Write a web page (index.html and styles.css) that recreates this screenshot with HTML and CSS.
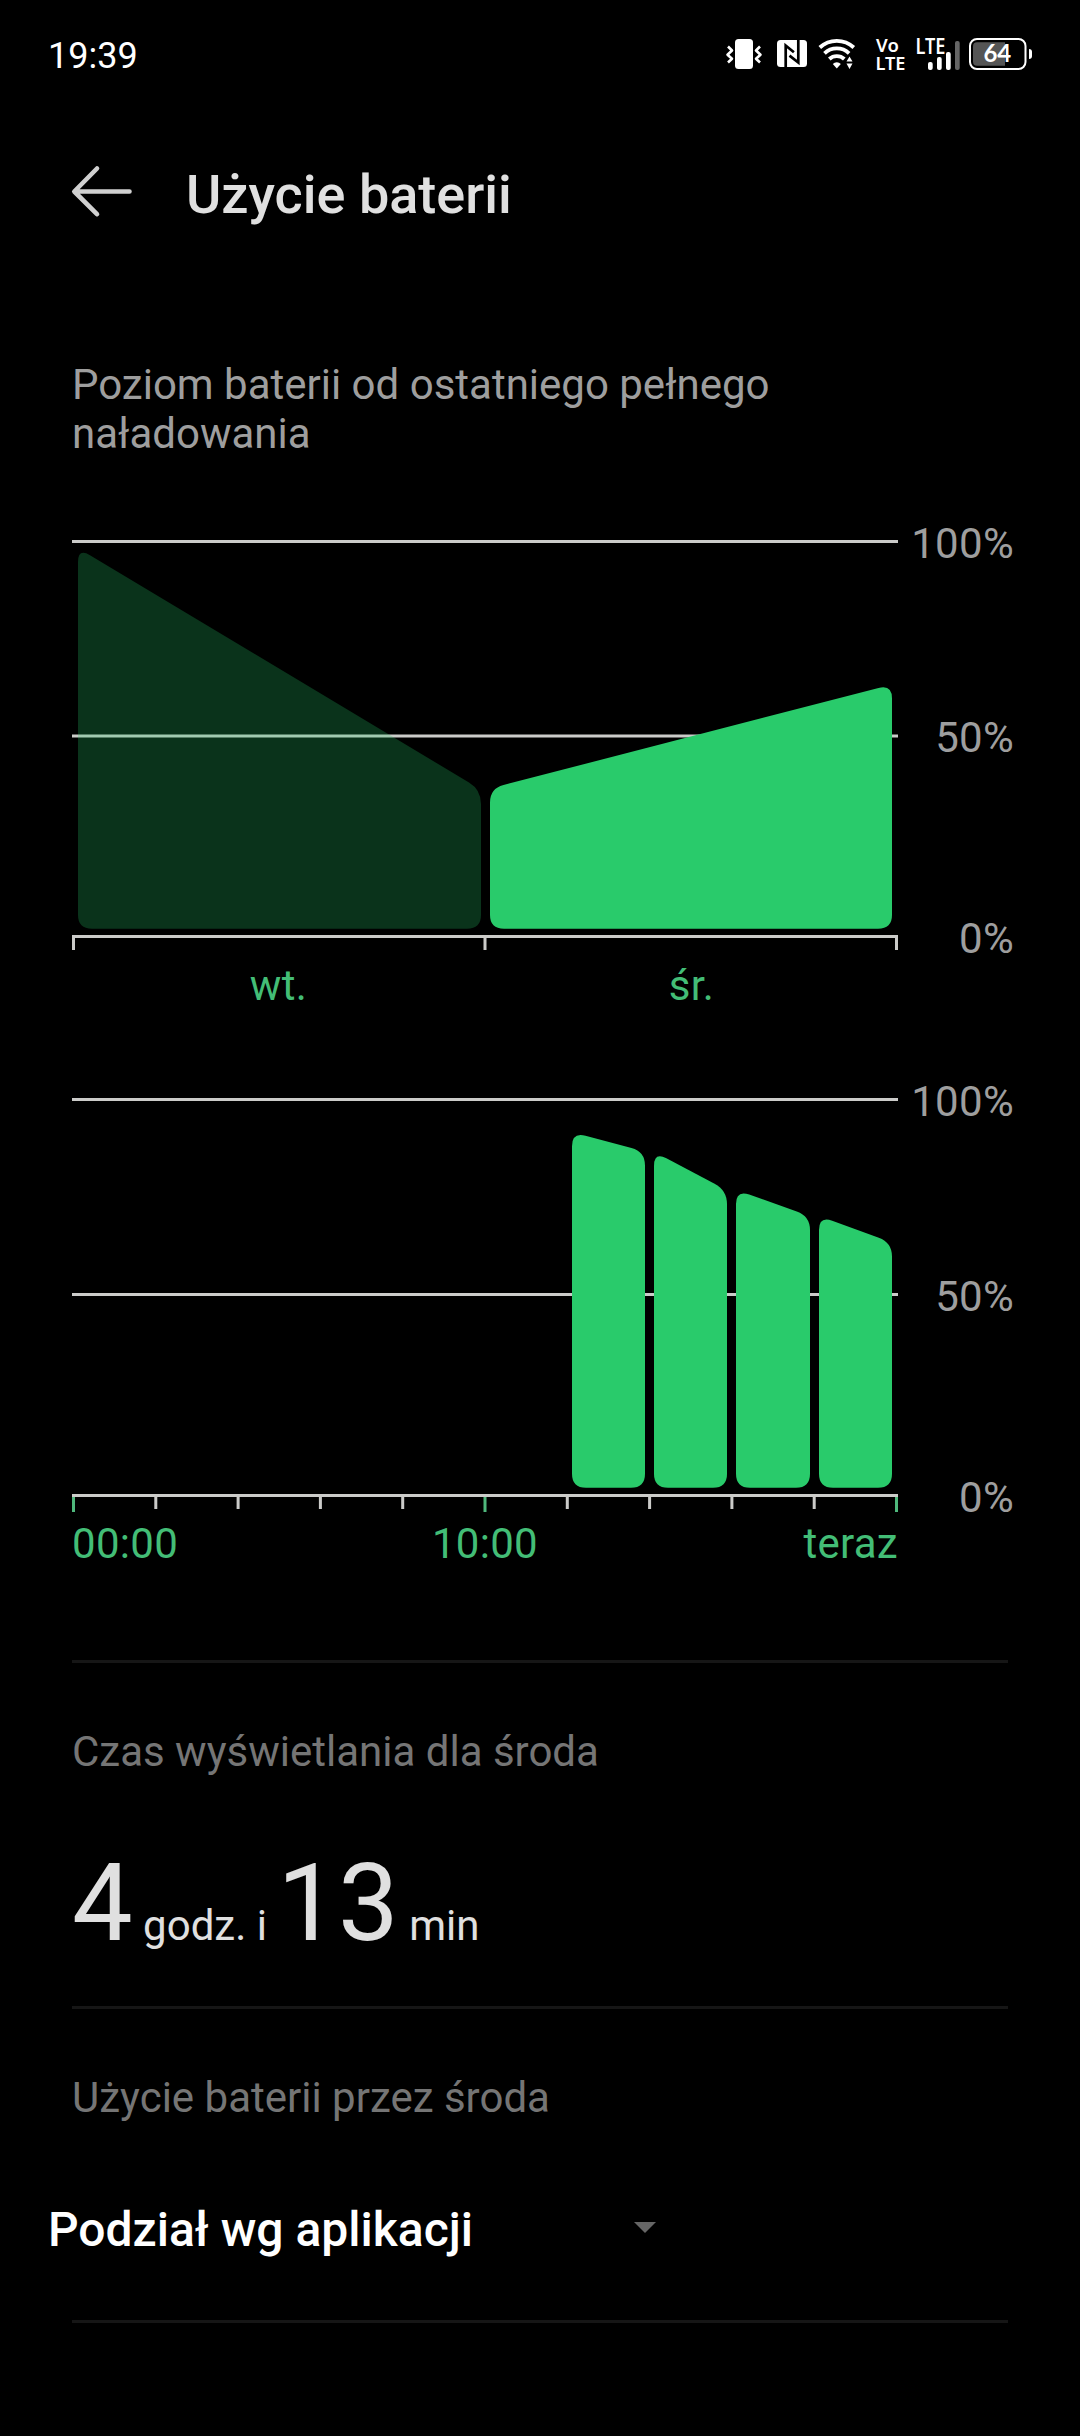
FILE: index.html
```html
<!doctype html>
<html lang="pl">
  <head>
    <meta charset="UTF-8" />
    <meta name="viewport" content="width=device-width, initial-scale=1.0" />
    <title>Użycie baterii</title>
    <link rel="stylesheet" href="styles.css">
  </head>
  <body>
    <div class="status-bar">
      <span class="clock">19:39</span>
      <svg class="status-icons" width="316" height="50" viewBox="720 24 316 50">
        <!-- vibrate -->
        <rect x="735" y="39" width="18" height="30" rx="3.5" fill="#fff" />
        <path d="M728 46.500l4 4-4.500 4.200 4.500 4-4 3.800M760 46.500l-4 4 4.500 4.200-4.500 4 4 3.800" fill="none" stroke="#fff" stroke-width="2.600" stroke-linejoin="round" />
        <!-- nfc -->
        <rect x="777" y="40" width="30" height="27" rx="3.500" fill="#fff" />
        <path d="M785.700 67V45.500L793.900 52.200M789.500 55.600L798.300 62.500V40" fill="none" stroke="#000" stroke-width="2.700" />
        <!-- wifi -->
        <g fill="none" stroke="#fff" stroke-width="3.800">
          <path d="M819.800 47.500a25 25 0 0 1 34 0" />
          <path d="M824.500 53.300a18 18 0 0 1 24.600 0" />
          <path d="M829.300 59a11 11 0 0 1 15 0" />
        </g>
        <path d="M836.800 68.500l-4-4.500a5.500 5.500 0 0 1 8 0z" fill="#fff" />
        <path d="M846.500 61.500h6l-3-5zM846.500 63.500h6l-3 5.500z" fill="#fff" />
        <!-- volte -->
        <text class="net" x="876" y="52" font-size="18.500" textLength="23">Vo</text>
        <text class="net" x="875.500" y="70" font-size="18" textLength="30" lengthAdjust="spacingAndGlyphs">LTE</text>
        <!-- signal -->
        <text class="net" x="915.500" y="53.500" font-size="21" textLength="30" lengthAdjust="spacingAndGlyphs">LTE</text>
        <g fill="#fff">
          <rect x="928" y="62" width="4.700" height="8" rx="2" />
          <rect x="937" y="57" width="4.700" height="13" rx="2" />
          <rect x="946" y="52" width="4.700" height="18" rx="2" />
          <rect x="955" y="41" width="4.700" height="29" rx="2" fill="#666" />
        </g>
        <!-- battery -->
        <path d="M977 42.300h28v23.400H977a4 4 0 0 1-4-4V46.300a4 4 0 0 1 4-4z" fill="#555" />
        <rect x="970" y="39" width="55.500" height="30" rx="7" fill="none" stroke="#fff" stroke-width="2" />
        <path d="M1029 49a3 3 0 0 1 3 3v4a3 3 0 0 1-3 3z" fill="#fff" />
        <text class="battery-text" x="997.300" y="62.300" text-anchor="middle">64</text>
      </svg>
    </div>

    <div class="title-bar">
      <svg class="back" width="62" height="54" viewBox="0 0 62 54">
        <path d="M27 4.500L4.300 27.500l22.700 22.700M5 27.500h54.500" fill="none" stroke="#d0d0d0" stroke-width="4.600" stroke-linecap="round" stroke-linejoin="round" />
      </svg>
      <h1>Użycie baterii</h1>
    </div>

    <p class="subtitle">Poziom baterii od ostatniego pełnego naładowania</p>

    <div class="chart">
      <div class="plot">
        <svg width="826" height="414" viewBox="0 0 826 414">
          <path class="axis" d="M0 0h826v3H0zM0 194.500h826v3H0zM0 395h826v3H0zM0 395h3v15H0zM411.500 395h3v15h-3zM823 395h3v15h-3z" />
          <path class="bar faded" d="M6 22Q6 8 18 15.200L397 242.500Q409 249.700 409 264V375Q409 388.700 395 388.700H20Q6 388.700 6 375z" />
          <path class="bar" d="M418 262.500Q418 248.500 431.500 245L806.500 147.900Q820 144.400 820 158.400V375Q820 388.700 806 388.700H432Q418 388.700 418 375z" />
        </svg>
        <div class="x-labels days">
          <span>wt.</span>
          <span>śr.</span>
        </div>
      </div>
      <div class="y-labels">
        <span>100%</span>
        <span>50%</span>
        <span>0%</span>
      </div>
    </div>

    <div class="chart">
      <div class="plot">
        <svg width="826" height="414" viewBox="0 0 826 414">
          <path class="axis" d="M0 0h826v3H0zM0 195h826v3H0zM0 396h826v3H0z" />
          <path class="axis" d="M82.300 399h3v12h-3zM164.600 399h3v12h-3zM246.900 399h3v12h-3zM329.200 399h3v12h-3zM493.800 399h3v12h-3zM576.100 399h3v12h-3zM658.400 399h3v12h-3zM740.700 399h3v12h-3z" />
          <path class="tick" d="M0 399h3v15H0zM411.500 399h3v15h-3zM823 399h3v15h-3z" />
          <path class="bar" d="M500 48.200Q500 34.200 513.500 37.800L559.500 49.900Q573 53.500 573 67.500V375.700Q573 389.700 559 389.700H514Q500 389.700 500 375.700z" />
          <path class="bar" d="M582 67.800Q582 53.800 594.400 60.300L642.600 85.700Q655 92.300 655 106.300V375.700Q655 389.700 641 389.700H596Q582 389.700 582 375.700z" />
          <path class="bar" d="M664 106Q664 92 677.200 96.600L724.800 113.400Q738 118 738 132V375.700Q738 389.700 724 389.700H678Q664 389.700 664 375.700z" />
          <path class="bar" d="M747 132Q747 118 760.200 122.700L806.800 139.800Q820 144.600 820 158.600V375.700Q820 389.700 806 389.700H761Q747 389.700 747 375.700z" />
        </svg>
        <div class="x-labels hours">
          <span>00:00</span>
          <span>10:00</span>
          <span>teraz</span>
        </div>
      </div>
      <div class="y-labels hourly">
        <span>100%</span>
        <span>50%</span>
        <span>0%</span>
      </div>
    </div>

    <div class="section screen-time">
      <h2>Czas wyświetlania dla środa</h2>
      <p class="duration"><b>4</b> godz. i <b>13</b> min</p>
    </div>

    <div class="section usage">
      <h2>Użycie baterii przez środa</h2>
      <div class="dropdown">
        <span>Podział wg aplikacji</span>
        <svg width="22" height="11" viewBox="0 0 22 11">
          <path d="M0 0h22L11 11z" fill="#666" />
        </svg>
      </div>
    </div>

    <div class="section"></div>
  </body>
</html>
```
FILE: styles.css
```css
* {
  box-sizing: border-box;
}
body {
  margin: 0;
  height: 2436px;
  background-color: #000;
  color: #e0e0e0;
  font-family: Roboto, "Noto Sans", sans-serif;
  font-size: 42px;
  line-height: 49px;
  overflow: hidden;
}
h1,
h2,
p {
  margin: 0;
  font-weight: 400;
}
svg {
  display: block;
}
.status-bar {
  display: flex;
  justify-content: space-between;
  padding: 24px 44px 0 48px;
  height: 112px;
}
.clock {
  padding-top: 10px;
  color: #fff;
  font-size: 36px;
  line-height: 45px;
}
.net {
  font-family: "Noto Sans", sans-serif;
  font-weight: 600;
  fill: #fff;
}
.battery-text {
  font-family: Lato, sans-serif;
  font-size: 24px;
  font-weight: 700;
  fill: #fff;
}
.title-bar {
  display: flex;
  align-items: center;
  height: 164px;
  padding-left: 70px;
}
.title-bar h1 {
  margin: 2px 0 0 54px;
  font-size: 54px;
  font-weight: 500;
  line-height: 64px;
}
.back {
  margin-bottom: 6px;
}
.subtitle {
  margin: 84px 72px 61px;
  width: 750px;
  color: #9e9e9e;
}
.chart {
  display: flex;
  justify-content: space-between;
  margin: 0 66px 67px 72px;
}
.plot {
  width: 826px;
  padding-top: 21px;
}
.axis {
  fill: #cbcbc9;
}
.bar {
  fill: #29cb6b;
}
.faded {
  opacity: 0.25;
}
.tick {
  fill: #4fb87c;
}
.x-labels {
  display: grid;
  margin-top: 7px;
  color: #43bd76;
  letter-spacing: 0.3px;
}
.days {
  grid-template-columns: 1fr 1fr;
  text-align: center;
}
.hours {
  grid-template-columns: 1fr 1fr 1fr;
}
.hours span:nth-child(2) {
  text-align: center;
}
.hours span:nth-child(3) {
  text-align: right;
}
.y-labels {
  display: grid;
  grid-template-rows: 194px 201px 49px;
  color: #9e9e9e;
  letter-spacing: 0.3px;
  text-align: right;
}
.y-labels.hourly {
  grid-template-rows: 195px 201px 49px;
}
.section {
  margin: 0 72px;
  border-top: 3px solid #161616;
}
.section h2 {
  color: #757575;
  font-size: 42px;
}
.screen-time {
  margin-top: 92px;
  height: 346px;
  padding-top: 64px;
}
.duration {
  margin-top: 64px;
  line-height: 126px;
}
.duration b {
  font-size: 108px;
  font-weight: 400;
}
.usage {
  height: 314px;
  padding-top: 64px;
}
.dropdown {
  display: flex;
  align-items: center;
  justify-content: space-between;
  width: 608px;
  margin: 80px 0 0 -24px;
  color: #fff;
  font-size: 48px;
  font-weight: 500;
  line-height: 56px;
}
.dropdown svg {
  margin-bottom: 5px;
}
```
